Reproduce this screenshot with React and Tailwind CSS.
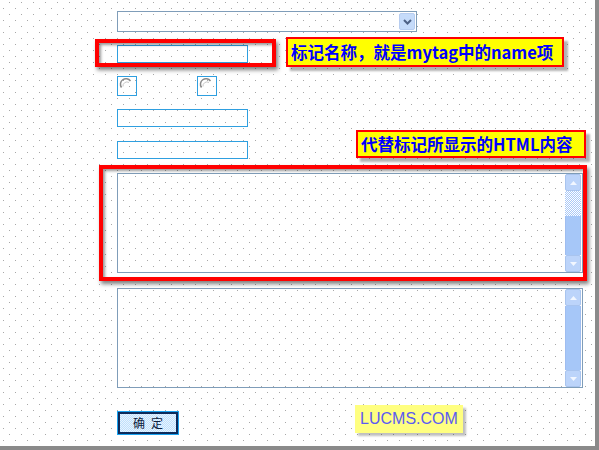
import React from "react";

const CJK = "font-['Noto_Sans_CJK_SC','Noto_Sans',sans-serif]";

function ArrowBtn({ up }) {
  return (
    <div className="h-[17px] w-full border border-[#a9c4ee] bg-[#bcd4fa] rounded-[2px] flex items-center justify-center">
      <svg width="7" height="4" viewBox="0 0 7 4">
        {up ? (
          <path d="M0 4 L3.5 0 L7 4 Z" fill="#f2f7ff" />
        ) : (
          <path d="M0 0 L3.5 4 L7 0 Z" fill="#f2f7ff" />
        )}
      </svg>
    </div>
  );
}

function Scrollbar({ checker, thumb }) {
  return (
    <div className="w-[16px] flex flex-col h-full">
      <ArrowBtn up />
      {checker > 0 && (
        <div
          className="w-full bg-[conic-gradient(#a9c8f7_25%,#ffffff_0_50%,#a9c8f7_0_75%,#ffffff_0)] bg-[length:2px_2px]"
          style={{ height: checker }}
        />
      )}
      <div className="w-full flex-1 bg-[#a6c7f8] border-x border-[#9fbdf0]" style={{ minHeight: thumb }} />
      <ArrowBtn />
    </div>
  );
}

function Radio() {
  return (
    <div className="w-[20px] h-[20px] border border-[#2e9fe0]">
      <svg width="18" height="18" viewBox="0 0 18 18">
        <path d="M3.5 10.5 A5.5 5.5 0 0 1 12.5 4" fill="none" stroke="#8a8a8a" strokeWidth="1.5" />
        <path d="M5 9.5 A4 4 0 0 1 11 5.5" fill="none" stroke="#c8c8c8" strokeWidth="1" />
      </svg>
    </div>
  );
}

export default function App() {
  return (
    <div
      className={`relative w-[599px] h-[450px] overflow-hidden bg-white border-r-4 border-b-4 border-[#8a8a8a] ${CJK} [background-image:radial-gradient(circle_at_0.5px_0.5px,#a8a8a8_0.75px,transparent_0.8px),radial-gradient(circle_at_0.5px_0.5px,#a8a8a8_0.75px,transparent_0.8px)] [background-size:12px_12px] [background-position:9px_2px,3px_8px]`}
    >
      <div className="flex flex-col items-start pl-[117px] pt-[11px]">
        {/* select */}
        <div className="w-[300px] h-[21px] border border-[#7f9db9] flex justify-end p-px">
          <div className="w-[16px] h-full border border-[#b7cdf0] bg-[#c5dbfa] rounded-[2px] flex items-center justify-center">
            <svg width="9" height="6" viewBox="0 0 9 6">
              <path d="M1 1 L4.5 4.5 L8 1" fill="none" stroke="#4d6185" strokeWidth="2" />
            </svg>
          </div>
        </div>
        {/* input 1 */}
        <div className="mt-[13px] w-[131px] h-[18px] border border-[#2e9fe0]" />
        {/* radios */}
        <div className="mt-[13px] flex gap-[60px]">
          <Radio />
          <Radio />
        </div>
        <div className="mt-[13px] w-[131px] h-[18px] border border-[#2e9fe0]" />
        <div className="mt-[14px] w-[131px] h-[18px] border border-[#2e9fe0]" />
        {/* textarea 1 */}
        <div className="mt-[14px] w-[466px] h-[100px] border border-[#7f9db9] flex justify-end pr-px">
          <Scrollbar checker={25} thumb={39} />
        </div>
        {/* textarea 2 */}
        <div className="mt-[15px] w-[466px] h-[100px] border border-[#7f9db9] flex justify-end pr-px">
          <Scrollbar checker={0} thumb={60} />
        </div>
        {/* button */}
        <div className="mt-[23px] w-[62px] h-[24px] border border-[#1aa3f0]">
          <div className="w-full h-full border-2 border-[#0c2a5a] bg-[conic-gradient(#bfe0fb_25%,#e8f4ff_0_50%,#bfe0fb_0_75%,#e8f4ff_0)] bg-[length:2px_2px] flex items-center justify-center text-[12px] leading-none text-[#0c2040] tracking-[6px] pl-[6px]">
            确定
          </div>
        </div>
      </div>

      {/* annotations */}
      <div className="absolute left-[95px] top-[39px] w-[181px] h-[28px] border-4 border-[#ff0000] shadow-[2px_3px_4px_rgba(0,0,0,0.5),inset_2px_2px_3px_rgba(0,0,0,0.4)]" />
      <div className="absolute left-[286px] top-[37px] w-[278px] h-[30px] border-2 border-[#ff0000] bg-[#ffff00] shadow-[4px_4px_2px_rgba(0,0,0,0.3)] flex items-center pl-[3px] text-[16.5px] font-bold text-[#0000ff] leading-none whitespace-nowrap">
        标记名称，就是mytag中的name项
      </div>
      <div className="absolute left-[356px] top-[130px] w-[230px] h-[28px] border-2 border-[#ff0000] bg-[#ffff00] shadow-[4px_4px_2px_rgba(0,0,0,0.3)] flex items-center pl-[3px] text-[16.5px] font-bold text-[#0000ff] leading-none whitespace-nowrap">
        代替标记所显示的HTML内容
      </div>
      <div className="absolute left-[99px] top-[165px] w-[488px] h-[116px] border-4 border-[#ff0000] shadow-[2px_3px_4px_rgba(0,0,0,0.5),inset_2px_2px_3px_rgba(0,0,0,0.4)]" />
      <div className="absolute left-[355px] top-[405px] w-[108px] h-[28px] bg-[#ffff80] shadow-[3px_3px_2px_rgba(0,0,0,0.25)] flex items-center justify-center font-['Liberation_Sans',Arial,sans-serif] text-[16px] text-[#5b5bf2] leading-none">
        LUCMS.COM
      </div>
    </div>
  );
}
